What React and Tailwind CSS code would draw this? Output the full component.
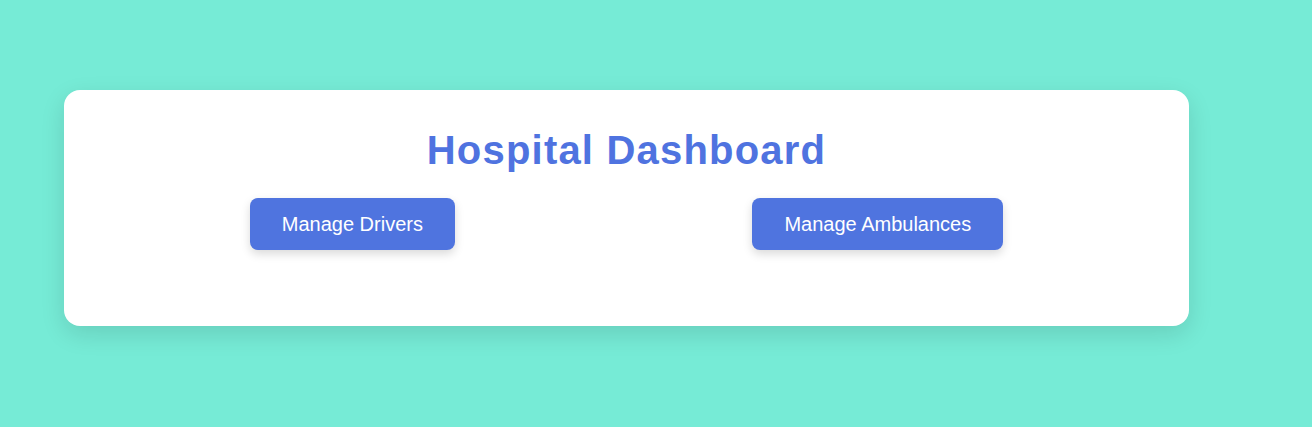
export default function App() {
  return (
    <div className="min-h-[427px] w-full bg-[#76ebd6] pt-[90px] pl-16" style={{ fontFamily: '"Liberation Sans", Arial, sans-serif' }}>
      <div className="w-[1125px] h-[236px] bg-white rounded-2xl shadow-[0_8px_24px_rgba(0,0,0,0.12)] px-[37px] pt-[37px]">
        <h1 className="text-center text-[40px] leading-[46px] font-bold tracking-[1.2px] text-[#4f73e0]">
          Hospital Dashboard
        </h1>
        <div className="mt-[25px] flex justify-around">
          <button className="px-8 h-[52px] rounded-lg bg-[#4f74df] text-white text-[20px] leading-[22px] shadow-[0_4px_10px_rgba(0,0,0,0.15)]">
            Manage Drivers
          </button>
          <button className="px-8 h-[52px] rounded-lg bg-[#4f74df] text-white text-[20px] leading-[22px] shadow-[0_4px_10px_rgba(0,0,0,0.15)]">
            Manage Ambulances
          </button>
        </div>
      </div>
    </div>
  );
}
